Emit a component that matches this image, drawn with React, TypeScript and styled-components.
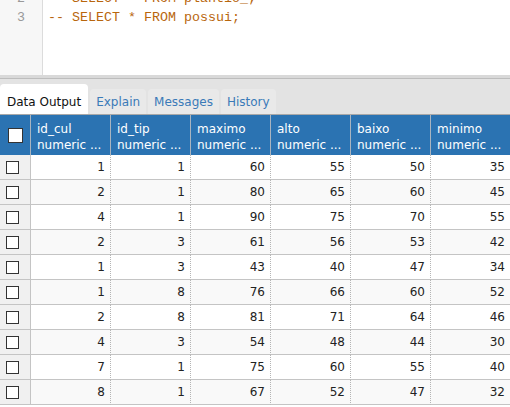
import React from "react";
import styled, { createGlobalStyle } from "styled-components";

const Global = createGlobalStyle`
  html, body { margin: 0; padding: 0; background: #fff; }
  body { width: 510px; height: 407px; overflow: hidden; font-family: "DejaVu Sans", Verdana, sans-serif; }
`;

const Page = styled.div`
  width: 510px;
  height: 407px;
  display: flex;
  flex-direction: column;
  overflow: hidden;
`;

const Editor = styled.div`
  height: 75px;
  display: flex;
  overflow: hidden;
  background: #fff;
  flex-shrink: 0;
`;

const Gutter = styled.div`
  width: 42px;
  background: #f7f7f7;
  border-right: 1px solid #dcdcdc;
  flex-shrink: 0;
`;

const LineNums = styled.div`
  margin-top: -11px;
  display: flex;
  flex-direction: column;
`;

const LineNum = styled.div`
  height: 19px;
  line-height: 19px;
  padding-right: 17px;
  text-align: right;
  color: #999;
  font-family: "Liberation Mono", "Courier New", monospace;
  font-size: 13.33px;
`;

const Code = styled.div`
  flex: 1;
  padding-left: 5px;
`;

const CodeLines = styled.div`
  margin-top: -11px;
  display: flex;
  flex-direction: column;
`;

const CodeLine = styled.div`
  height: 19px;
  line-height: 19px;
  white-space: pre;
  color: #b8660d;
  font-family: "Liberation Mono", "Courier New", monospace;
  font-size: 13.33px;
`;

const Splitter = styled.div`
  height: 3px;
  background: #d9d9d9;
  border-bottom: 1px solid #bdbdbd;
  flex-shrink: 0;
`;

const TabBar = styled.div`
  height: 35px;
  background: #e3e3e3;
  border-bottom: 1px solid #a8a8a8;
  display: flex;
  align-items: flex-end;
  gap: 2px;
  flex-shrink: 0;
`;

const Tab = styled.div<{ $active?: boolean }>`
  height: ${(p) => (p.$active ? 30 : 25)}px;
  padding: 0 ${(p) => (p.$active ? 7 : 6)}px;
  box-sizing: border-box;
  background: ${(p) => (p.$active ? "#fff" : "#e9e9e9")};
  color: ${(p) => (p.$active ? "#111" : "#3a7ab8")};
  border-radius: 4px 4px 0 0;
  font-size: 12px;
  display: flex;
  align-items: center;
  padding-top: ${(p) => (p.$active ? 6 : 0)}px;
`;

const Grid = styled.div`
  display: grid;
  grid-template-columns: 31px repeat(6, 80px);
  font-size: 12px;
`;

const HeadCell = styled.div<{ $first?: boolean }>`
  height: 40px;
  box-sizing: border-box;
  background: #2b73b2;
  color: #fff;
  border-right: 1px solid #a9b4c0;
  padding: 6px 0 0 6px;
  line-height: 16px;
  display: flex;
  flex-direction: column;
  ${(p) => (p.$first ? "align-items: center; justify-content: center; padding: 0;" : "")}
`;

const HeadBox = styled.div`
  width: 13px;
  height: 13px;
  background: #fff;
  border: 1px solid #333;
`;

const SelCell = styled.div`
  height: 25px;
  box-sizing: border-box;
  background: #f0f0f0;
  border-right: 1px solid #c4c4c4;
  border-bottom: 1px solid #c4c4c4;
  display: flex;
  align-items: center;
  padding-left: 6px;
`;

const Box = styled.div`
  width: 11px;
  height: 11px;
  background: #fff;
  border: 1px solid #333;
`;

const Cell = styled.div<{ $alt?: boolean }>`
  height: 25px;
  box-sizing: border-box;
  background: ${(p) => (p.$alt ? "#f9f9f9" : "#fff")};
  border-right: 1px dotted #b5b5b5;
  border-bottom: 1px solid #c4c4c4;
  display: flex;
  align-items: center;
  justify-content: flex-end;
  padding-right: 5px;
  color: #222;
`;

const cols = ["id_cul", "id_tip", "maximo", "alto", "baixo", "minimo"];
const rows = [
  [1, 1, 60, 55, 50, 35],
  [2, 1, 80, 65, 60, 45],
  [4, 1, 90, 75, 70, 55],
  [2, 3, 61, 56, 53, 42],
  [1, 3, 43, 40, 47, 34],
  [1, 8, 76, 66, 60, 52],
  [2, 8, 81, 71, 64, 46],
  [4, 3, 54, 48, 44, 30],
  [7, 1, 75, 60, 55, 40],
  [8, 1, 67, 52, 47, 32],
];

export default function App() {
  return (
    <Page>
      <Global />
      <Editor>
        <Gutter>
          <LineNums>
            <LineNum>2</LineNum>
            <LineNum>3</LineNum>
          </LineNums>
        </Gutter>
        <Code>
          <CodeLines>
            <CodeLine>-- SELECT * FROM plantio_;</CodeLine>
            <CodeLine>-- SELECT * FROM possui;</CodeLine>
          </CodeLines>
        </Code>
      </Editor>
      <Splitter />
      <TabBar>
        <Tab $active>Data Output</Tab>
        <Tab>Explain</Tab>
        <Tab>Messages</Tab>
        <Tab>History</Tab>
      </TabBar>
      <Grid>
        <HeadCell $first>
          <HeadBox />
        </HeadCell>
        {cols.map((c) => (
          <HeadCell key={c}>
            <span>{c}</span>
            <span>numeric ...</span>
          </HeadCell>
        ))}
        {rows.map((r, i) => (
          <React.Fragment key={i}>
            <SelCell>
              <Box />
            </SelCell>
            {r.map((v, j) => (
              <Cell key={j} $alt={i % 2 === 1}>
                {v}
              </Cell>
            ))}
          </React.Fragment>
        ))}
      </Grid>
    </Page>
  );
}
